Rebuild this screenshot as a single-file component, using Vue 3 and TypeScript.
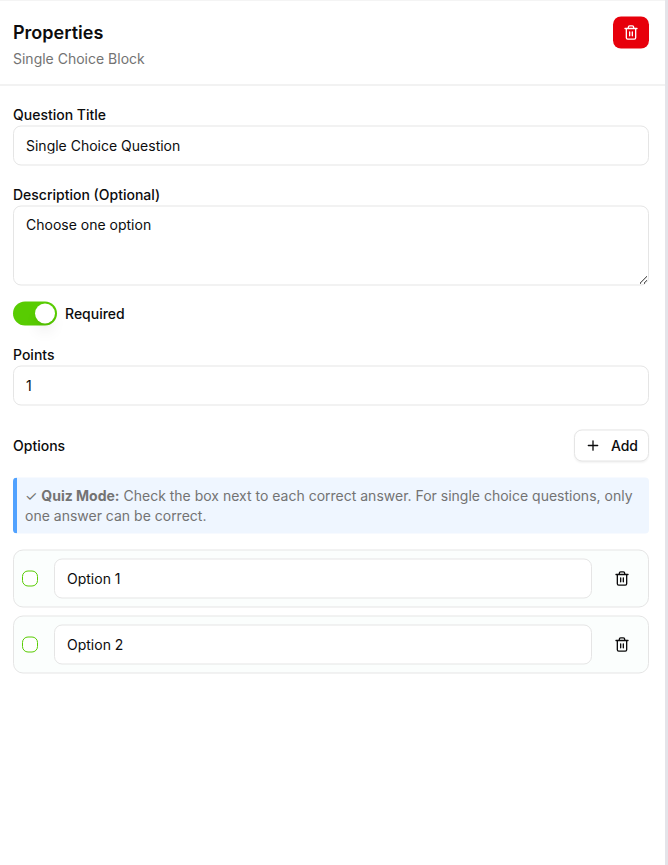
<script setup lang="ts">
import { ref } from 'vue'

interface Option {
  id: number
  text: string
  correct: boolean
}

const title = ref('Single Choice Question')
const description = ref('Choose one option')
const required = ref(true)
const points = ref('1')
const options = ref<Option[]>([
  { id: 1, text: 'Option 1', correct: false },
  { id: 2, text: 'Option 2', correct: false },
])

function addOption() {
  const id = Math.max(0, ...options.value.map((o) => o.id)) + 1
  options.value.push({ id, text: `Option ${id}`, correct: false })
}

function removeOption(id: number) {
  options.value = options.value.filter((o) => o.id !== id)
}

function toggleCorrect(option: Option) {
  const next = !option.correct
  options.value.forEach((o) => (o.correct = false))
  option.correct = next
}
</script>

<template>
  <div class="frame">
    <section class="panel">
      <header class="header">
        <div class="header-row">
          <h3>Properties</h3>
          <button class="danger" type="button" aria-label="Delete block">
            <svg class="icon" viewBox="0 0 24 24">
              <path d="M3 6h18M19 6v14c0 1-1 2-2 2H7c-1 0-2-1-2-2V6M8 6V4c0-1 1-2 2-2h4c1 0 2 1 2 2v2M10 11v6M14 11v6" />
            </svg>
          </button>
        </div>
        <p>Single Choice Block</p>
      </header>

      <div class="content">
        <div class="field">
          <label for="title">Question Title</label>
          <input id="title" v-model="title" class="input" />
        </div>
        <div class="field description">
          <label for="description">Description (Optional)</label>
          <textarea id="description" v-model="description" class="input area"></textarea>
        </div>
        <div class="switch-row">
          <button
            class="switch"
            :class="{ on: required }"
            type="button"
            role="switch"
            :aria-checked="required"
            @click="required = !required"
          >
            <span class="thumb"></span>
          </button>
          <label>Required</label>
        </div>
        <div class="field points">
          <label for="points">Points</label>
          <input id="points" v-model="points" class="input" />
        </div>

        <div class="options-head">
          <label>Options</label>
          <button class="add" type="button" @click="addOption">
            <svg class="icon" viewBox="0 0 24 24"><path d="M5 12h14M12 5v14" /></svg>
            Add
          </button>
        </div>
        <div class="note">
          ✓ <strong>Quiz Mode:</strong> Check the box next to each correct answer. For single choice questions, only one answer can be correct.
        </div>
        <div class="options">
          <div v-for="option in options" :key="option.id" class="option">
            <button
              class="check"
              :class="{ checked: option.correct }"
              type="button"
              role="checkbox"
              :aria-checked="option.correct"
              @click="toggleCorrect(option)"
            ></button>
            <input v-model="option.text" class="input" />
            <button class="ghost" type="button" aria-label="Remove option" @click="removeOption(option.id)">
              <svg class="icon" viewBox="0 0 24 24">
                <path d="M3 6h18M19 6v14c0 1-1 2-2 2H7c-1 0-2-1-2-2V6M8 6V4c0-1 1-2 2-2h4c1 0 2 1 2 2v2M10 11v6M14 11v6" />
              </svg>
            </button>
          </div>
        </div>
      </div>
    </section>
  </div>
</template>

<style>
body {
  background: #fff;
  overflow: hidden;
}
</style>

<style scoped>
* {
  box-sizing: border-box;
}
.frame {
  height: 865px;
  overflow: hidden;
  border-right: 3px solid #e4e4e9;
  font-family: Inter, 'Liberation Sans', sans-serif;
  font-size: 14px;
  line-height: 20px;
  color: #0c0c0d;
}
.panel {
  height: 866px;
  margin-top: -1px;
  border-top: 1px solid #e8e8e8;
  transform: translateY(0.5px);
}
.header {
  padding: 16px 16px 16px 13px;
  border-bottom: 1px solid #e5e5e5;
}
.header-row {
  display: flex;
  align-items: center;
  justify-content: space-between;
  height: 32px;
}
h3 {
  margin: 0;
  font-size: 18px;
  line-height: 28px;
  font-weight: 600;
}
p {
  margin: 0;
  color: #737373;
}
button {
  display: flex;
  align-items: center;
  justify-content: center;
  flex: none;
  padding: 0;
  border: 0;
  font: inherit;
  color: inherit;
  background: none;
}
.icon {
  width: 16px;
  height: 16px;
  fill: none;
  stroke: currentColor;
  stroke-width: 2;
  stroke-linecap: round;
  stroke-linejoin: round;
}
.danger {
  width: 36px;
  height: 32px;
  border-radius: 8px;
  background: #e7000b;
  color: #fff;
}
.content {
  padding: 19px 16px 0 13px;
}
label {
  display: block;
  font-weight: 500;
}
.field label {
  margin-bottom: 1px;
}
.input {
  display: block;
  width: 100%;
  height: 40px;
  margin: 0;
  padding: 7px 12px 9px;
  border: 1px solid #e5e5e5;
  border-radius: 8px;
  outline: none;
  background: #fff;
  color: inherit;
  font: inherit;
}
.area {
  height: 80px;
  padding: 8px 12px;
  resize: vertical;
}
.description {
  margin-top: 19px;
}
.switch-row {
  display: flex;
  align-items: center;
  gap: 8px;
  margin-top: 16px;
}
.switch {
  justify-content: flex-start;
  width: 44px;
  height: 24px;
  padding: 2px;
  border-radius: 12px;
  background: #e5e5e5;
}
.switch.on {
  justify-content: flex-end;
  background: #58cc02;
}
.thumb {
  width: 20px;
  height: 20px;
  border-radius: 50%;
  background: #fff;
  box-shadow: 0 10px 15px -3px rgb(0 0 0 / 0.1), 0 4px 6px -4px rgb(0 0 0 / 0.1);
}
.points {
  margin-top: 19px;
}
.options-head {
  display: flex;
  align-items: center;
  justify-content: space-between;
  margin-top: 24px;
}
.add {
  gap: 10px;
  height: 32px;
  padding: 0 10px;
  border: 1px solid #e5e5e5;
  border-radius: 8px;
  background: #fff;
  font-weight: 500;
  box-shadow: 0 1px 2px rgb(0 0 0 / 0.05);
}
.note {
  margin-top: 16px;
  padding: 8px;
  border-left: 4px solid #51a2ff;
  border-radius: 4px;
  background: #eff6ff;
  color: #737373;
}
strong {
  font-weight: 700;
}
.options {
  display: grid;
  gap: 8px;
  margin-top: 16px;
}
.option {
  display: flex;
  align-items: center;
  gap: 12px;
  padding: 8px;
  border: 1px solid #e5e5e5;
  border-radius: 10px;
  background: #fbfefd;
}
.option .input {
  flex: 1;
  width: auto;
  min-width: 0;
}
.check {
  width: 16px;
  height: 16px;
  margin-right: 4px;
  border: 1px solid #58cc02;
  border-radius: 6px;
  background: #fff;
}
.check.checked {
  background: #58cc02;
}
.ghost {
  width: 36px;
  height: 32px;
}
</style>
